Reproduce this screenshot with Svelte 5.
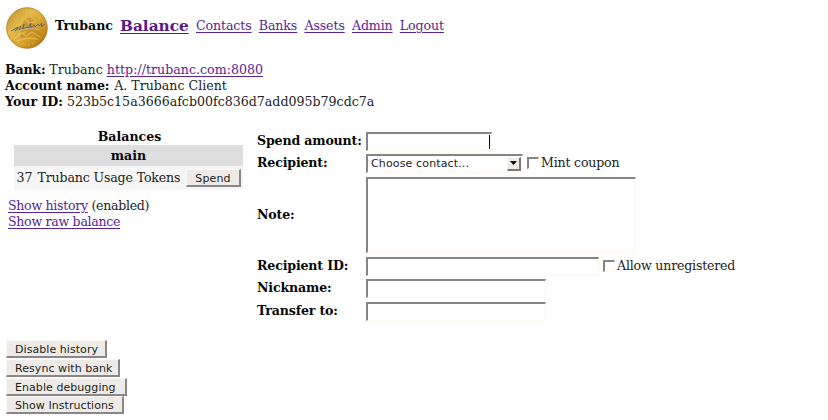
<script>
  const nav = ['Contacts', 'Banks', 'Assets', 'Admin', 'Logout'];
  const actions = [
    { label: 'Disable history', width: 101 },
    { label: 'Resync with bank', width: 114 },
    { label: 'Enable debugging', width: 121 },
    { label: 'Show Instructions', width: 118 }
  ];
</script>

<div class="page">
  <header>
    <svg class="coin" viewBox="0 0 42 42" aria-label="Trubanc coin">
      <defs>
        <linearGradient id="gold" x1="0" y1="0" x2="1" y2="1">
          <stop offset="0" stop-color="#b98a22" />
          <stop offset=".35" stop-color="#e3b94b" />
          <stop offset=".65" stop-color="#d69d26" />
          <stop offset="1" stop-color="#9c6108" />
        </linearGradient>
      </defs>
      <circle cx="21" cy="21" r="20.3" fill="url(#gold)" stroke="#a97a24" stroke-width=".8" />
      <path d="M8 12Q21-3 34 12M7 30Q20 46 35 30" fill="none" stroke="#eed073" stroke-width="2" stroke-dasharray="1.4 2.2" opacity=".4" />
      <path d="M14 27l2-9 3-6 5-2 4 4 2 8 5 4-1 5-7-3-6 3-7-1z" fill="#b27c18" opacity=".4" />
      <path d="M8 32l8-6 4 3 6-4 8 5M19 12l4 4 6-1M12 27l8-2M11 34l10-3 10 1" fill="none" stroke="#f5d877" stroke-width="1.4" opacity=".5" />
      <path d="M5 24l7-4-3 4 6-5-2 4 4-2 1-4-1 5 4-2 1 1 3-5-1 5 4-3 1 2 3-3 1 2 3-3-1 4 4-3" fill="none" stroke="#59656a" stroke-width="1" opacity=".9" />
      <path d="M13 23.5q8-3 20-1" fill="none" stroke="#c3bfa6" stroke-width=".8" />
    </svg>
    <b class="brand">Trubanc</b>
    <a class="current" href="#balance">Balance</a>
    <nav>
      {#each nav as item}<a href="#{item}">{item}</a>{/each}
    </nav>
  </header>

  <section class="info">
    <div class="bank"><b>Bank:</b> Trubanc <a href="#bank">http://trubanc.com:8080</a></div>
    <div class="account"><b>Account name:</b> <span>A. Trubanc Client</span></div>
    <div><b>Your ID:</b> 523b5c15a3666afcb00fc836d7add095b79cdc7a</div>
  </section>

  <main>
    <section class="balances">
      <div class="sheet">
        <div class="title">Balances</div>
        <div class="group">main</div>
        <div class="asset"><span class="amount">37</span><span class="token">Trubanc Usage Tokens</span><button class="spend">Spend</button></div>
      </div>
      <div class="links">
        <div><a href="#history">Show history</a> (enabled)</div>
        <div><a href="#raw">Show raw balance</a></div>
      </div>
    </section>

    <section class="form">
      <div class="row"><b>Spend amount:</b><div class="field amountbox"><span class="caret"></span></div></div>
      <div class="row"><b>Recipient:</b>
        <div class="field select"><span>Choose contact...</span><i><svg width="7" height="4" viewBox="0 0 7 4"><path d="M0 0h7L3.5 4z" /></svg></i></div>
        <span class="check"></span><span class="option">Mint coupon</span>
      </div>
      <div class="row note"><b>Note:</b><div class="field area"></div></div>
      <div class="row"><b>Recipient ID:</b><div class="field recipient"></div><span class="check"></span><span class="option">Allow unregistered</span></div>
      <div class="row"><b>Nickname:</b><div class="field short"></div></div>
      <div class="row"><b>Transfer to:</b><div class="field short"></div></div>
    </section>
  </main>

  <footer>
    {#each actions as action}
      <button style="width: {action.width}px">{action.label}</button>
    {/each}
  </footer>
</div>

<style>
  :global(body) { background: #fff; }
  .page { box-sizing: border-box; width: 828px; height: 420px; overflow: hidden; padding: 6px 5px 0; font: 12.6px/16px "DejaVu Serif", serif; color: #222; white-space: nowrap; }
  a { color: #5b2496; text-decoration: underline; text-decoration-thickness: 1px; text-underline-offset: 1.5px; }
  b { color: #080808; }
  header { display: flex; height: 43px; align-items: center; }
  .coin { width: 42px; height: 42px; margin: 1px 7px 0 1px; }
  .brand { width: 65px; margin-top: -3px; }
  .current { width: 76px; font-size: 15.3px; font-weight: bold; margin-top: -4px; color: #551a8b; }
  nav { display: flex; gap: 7.2px; margin-top: -3px; letter-spacing: -.11px; }
  .info { margin-top: 13px; height: 48px; }
  .bank { letter-spacing: .02px; }
  .bank b { letter-spacing: -.2px; }
  .account b { letter-spacing: -.07px; }
  .account span { margin-left: .7px; }
  main { display: flex; margin-top: 19px; height: 208px; }
  .balances { width: 252px; flex: none; }
  .sheet { width: 229px; margin-left: 9px; }
  .title, .group { text-align: center; font-weight: bold; color: #080808; }
  .title { height: 16px; padding-left: 2px; }
  .group { height: 21px; line-height: 21px; background: #dedede; }
  .asset { height: 24px; display: flex; align-items: center; background: #f6f6f6; }
  .amount { width: 21px; padding-left: 2.5px; }
  .token { width: 148.5px; letter-spacing: -.16px; }
  .links { margin: 8px 0 0 3px; letter-spacing: -.31px; }
  button { box-sizing: border-box; flex: none; height: 18px; padding: 0; display: block; border: 2px solid; border-color: #faf8f4 #88868a #88868a #faf8f4; border-width: 1px 2px 2px 1px; background: #eeebe7; color: #1c1c1c; font: 11px/15px "DejaVu Sans", sans-serif; }
  .spend { width: 55px; padding-top: 1px; letter-spacing: .15px; }
  .form { padding-top: 2.5px; }
  .row { display: flex; align-items: center; height: 19px; margin-bottom: 3.4px; }
  .row b { width: 109px; flex: none; letter-spacing: -.17px; }
  .row > b, .option { margin-top: -1px; }
  .row.note { height: 76px; margin: 4px 0; }
  .row.note b { margin-top: 0; }
  .field { box-sizing: border-box; flex: none; height: 19px; border: solid; border-width: 2px 1px 1px 2px; border-color: #858585 #fff9f1 #fff9f1 #858585; }
  .amountbox { width: 126px; display: flex; justify-content: flex-end; }
  .caret { width: 1px; height: 14px; margin: 1px 1px 0; background: #000; }
  .select { width: 157px; display: flex; justify-content: space-between; font: 11px/15px "DejaVu Sans", sans-serif; letter-spacing: .14px; padding: 0 1px 0 3px; }
  .select i { box-sizing: border-box; width: 14px; height: 14px; margin-top: 1px; background: #eeebe7; border: solid; border-color: #faf8f4 #777 #777 #faf8f4; border-width: 1px 2px 2px 1px; display: flex; align-items: center; justify-content: center; }
  .field.area { width: 270px; height: 76px; }
  .recipient { width: 233px; }
  .short { width: 180px; }
  .check { box-sizing: border-box; flex: none; width: 12px; height: 12px; margin: -1px 2.5px 0 3.5px; border: solid; border-width: 2px 1px 1px 2px; border-color: #858585 #fff9f1 #fff9f1 #858585; }
  .option { letter-spacing: -.2px; }
  footer { display: flex; flex-direction: column; gap: .8px; margin: 3px 0 0 1px; }
  footer button { padding: 1px 0 0 8px; text-align: left; letter-spacing: .06px; }
</style>
